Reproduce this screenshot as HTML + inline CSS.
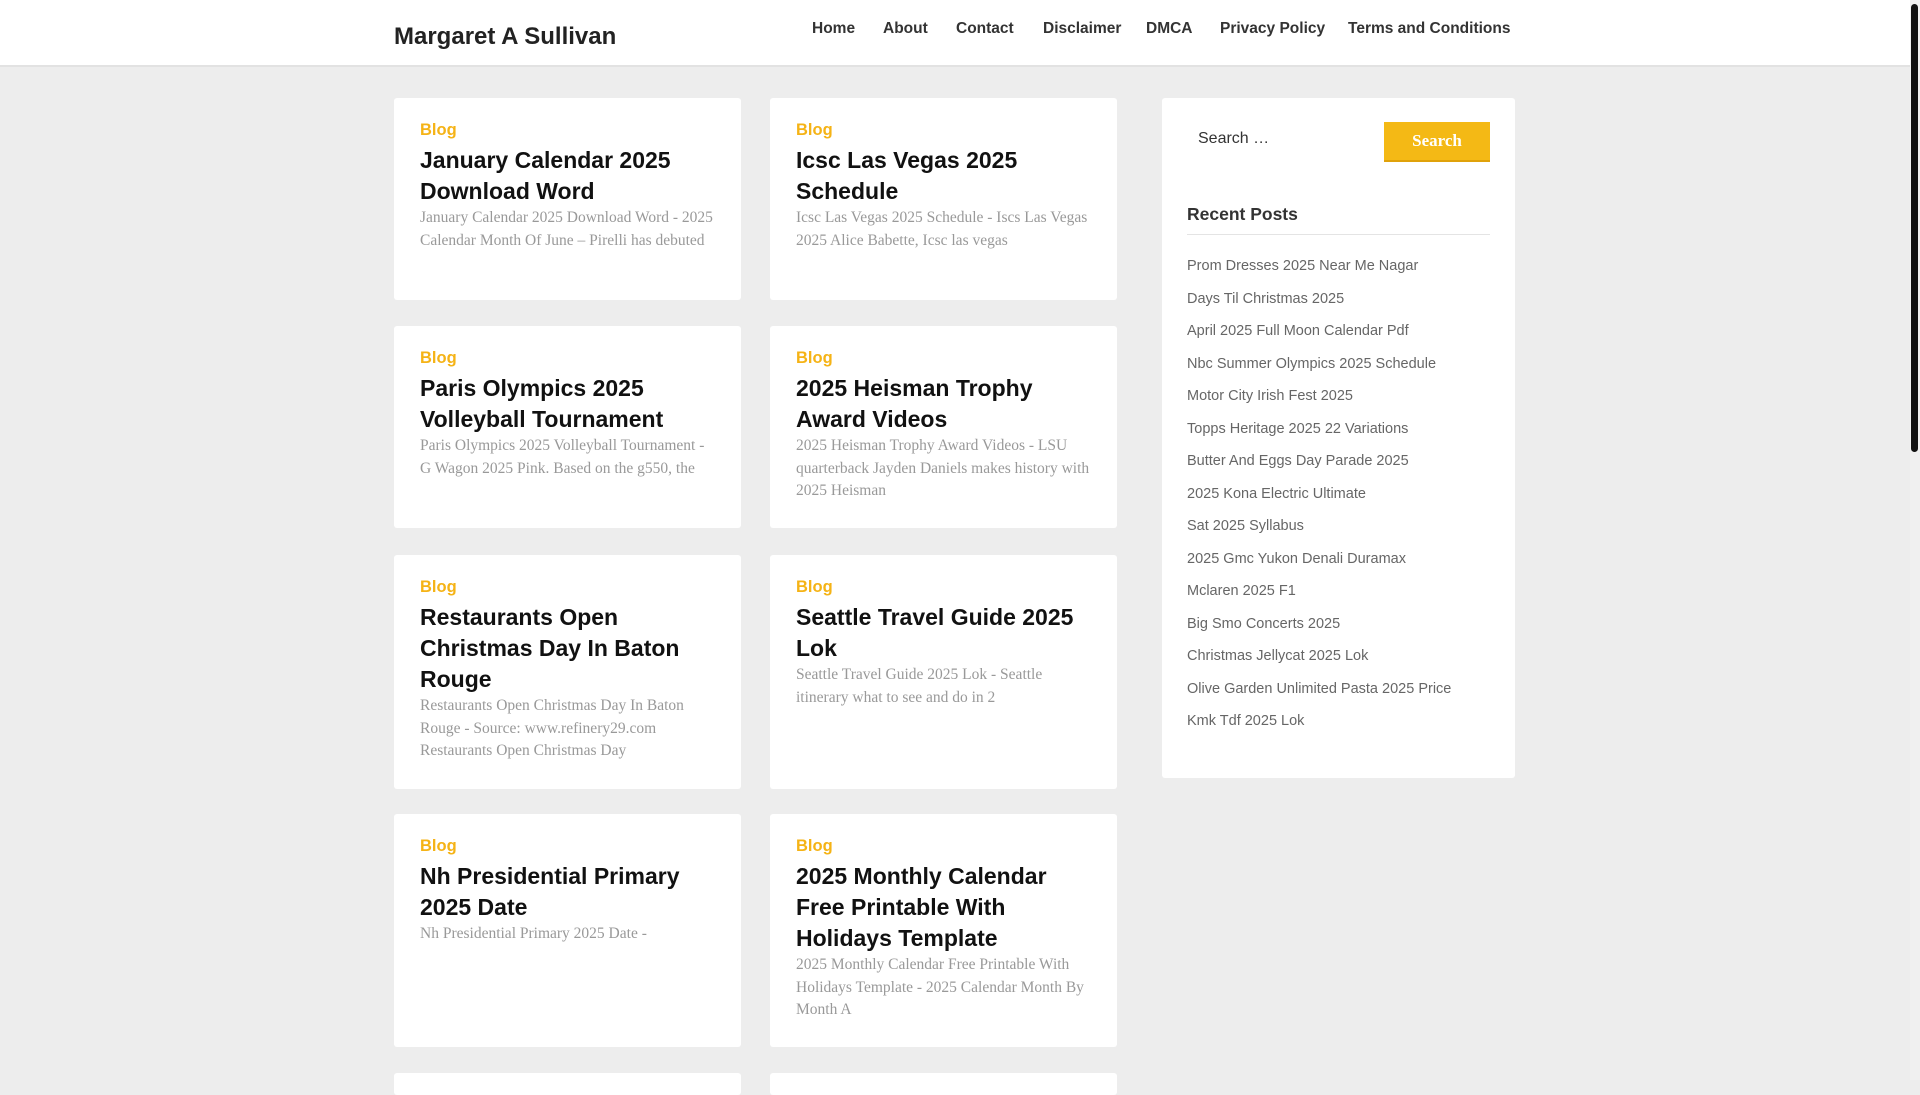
<!DOCTYPE html>
<html><head><meta charset="utf-8"><style>
*{box-sizing:border-box;margin:0;padding:0}
body{width:1920px;height:1080px;overflow:hidden;background:#ededed;font-family:"Liberation Sans",sans-serif;position:relative}
.hdr{position:absolute;left:0;top:0;width:1910px;height:67px;background:#fff;border-bottom:2px solid #e2e2e2}
.logo{position:absolute;left:394px;top:23px;font-size:24px;font-weight:bold;color:#222}
.nav{position:absolute;top:20px;font-size:15.5px;font-weight:bold;color:#333}
.sb{position:absolute;right:0;top:0;width:10px;height:1080px;background:#f0f0f0}
.sb i{position:absolute;left:1px;top:4px;width:7px;height:448px;background:#111;border-radius:4px}
.card{position:absolute;background:#fff;border-radius:3px;width:347px;padding:22px 26px 0}
.c{font-size:16.5px;font-weight:bold;color:#f5b316;line-height:20px}
.t{font-size:23px;font-weight:bold;color:#111;line-height:31px;margin-top:5px}
.e{font-family:"Liberation Serif",serif;font-size:15.5px;color:#999;line-height:22.6px}
.side{position:absolute;left:1162px;top:98px;width:353px;height:680px;background:#fff;border-radius:3px}
.side .s{position:absolute;left:36px;top:32px;font-size:16px;color:#333}
.btn{position:absolute;left:222px;top:24px;width:106px;height:40px;background:#f4b915;border-bottom:2px solid #e0a20a;color:#fff;font-family:"Liberation Serif",serif;font-size:17px;font-weight:bold;text-align:center;line-height:38px}
.rp{position:absolute;left:25px;top:106px;font-size:17.5px;font-weight:bold;color:#333}
.ln{position:absolute;left:25px;top:136px;width:303px;height:1px;background:#e4e4e4}
.ul{position:absolute;left:25px;top:152px;font-size:14.5px;color:#666;line-height:32.5px}
</style></head><body>
<div class="hdr">
<div class="logo">Margaret A Sullivan</div>
<span class="nav" style="left:812px">Home</span>
<span class="nav" style="left:883px">About</span>
<span class="nav" style="left:956px">Contact</span>
<span class="nav" style="left:1043px">Disclaimer</span>
<span class="nav" style="left:1146px">DMCA</span>
<span class="nav" style="left:1220px">Privacy Policy</span>
<span class="nav" style="left:1348px">Terms and Conditions</span>
</div>
<div class="sb"><i></i></div>

<div class="card" style="left:394px;top:98px;height:202px"><div class="c">Blog</div><div class="t">January Calendar 2025 Download Word</div><div class="e">January Calendar 2025 Download Word - 2025 Calendar Month Of June – Pirelli has debuted</div></div>
<div class="card" style="left:770px;top:98px;height:202px"><div class="c">Blog</div><div class="t">Icsc Las Vegas 2025 Schedule</div><div class="e">Icsc Las Vegas 2025 Schedule - Iscs Las Vegas 2025 Alice Babette, Icsc las vegas</div></div>
<div class="card" style="left:394px;top:326px;height:202px"><div class="c">Blog</div><div class="t">Paris Olympics 2025 Volleyball Tournament</div><div class="e">Paris Olympics 2025 Volleyball Tournament - G Wagon 2025 Pink. Based on the g550, the</div></div>
<div class="card" style="left:770px;top:326px;height:202px"><div class="c">Blog</div><div class="t">2025 Heisman Trophy Award Videos</div><div class="e">2025 Heisman Trophy Award Videos - LSU quarterback Jayden Daniels makes history with 2025 Heisman</div></div>
<div class="card" style="left:394px;top:555px;height:234px"><div class="c">Blog</div><div class="t">Restaurants Open Christmas Day In Baton Rouge</div><div class="e">Restaurants Open Christmas Day In Baton Rouge - Source: www.refinery29.com Restaurants Open Christmas Day</div></div>
<div class="card" style="left:770px;top:555px;height:234px"><div class="c">Blog</div><div class="t">Seattle Travel Guide 2025 Lok</div><div class="e">Seattle Travel Guide 2025 Lok - Seattle itinerary what to see and do in 2</div></div>
<div class="card" style="left:394px;top:814px;height:233px"><div class="c">Blog</div><div class="t">Nh Presidential Primary 2025 Date</div><div class="e">Nh Presidential Primary 2025 Date -</div></div>
<div class="card" style="left:770px;top:814px;height:233px"><div class="c">Blog</div><div class="t">2025 Monthly Calendar Free Printable With Holidays Template</div><div class="e">2025 Monthly Calendar Free Printable With Holidays Template - 2025 Calendar Month By Month A</div></div>
<div class="card" style="left:394px;top:1073px;height:20px"></div>
<div class="card" style="left:770px;top:1073px;height:20px"></div>

<div class="side">
<div class="s">Search …</div>
<div class="btn">Search</div>
<div class="rp">Recent Posts</div>
<div class="ln"></div>
<div class="ul">Prom Dresses 2025 Near Me Nagar<br>Days Til Christmas 2025<br>April 2025 Full Moon Calendar Pdf<br>Nbc Summer Olympics 2025 Schedule<br>Motor City Irish Fest 2025<br>Topps Heritage 2025 22 Variations<br>Butter And Eggs Day Parade 2025<br>2025 Kona Electric Ultimate<br>Sat 2025 Syllabus<br>2025 Gmc Yukon Denali Duramax<br>Mclaren 2025 F1<br>Big Smo Concerts 2025<br>Christmas Jellycat 2025 Lok<br>Olive Garden Unlimited Pasta 2025 Price<br>Kmk Tdf 2025 Lok</div>
</div>
</body></html>
